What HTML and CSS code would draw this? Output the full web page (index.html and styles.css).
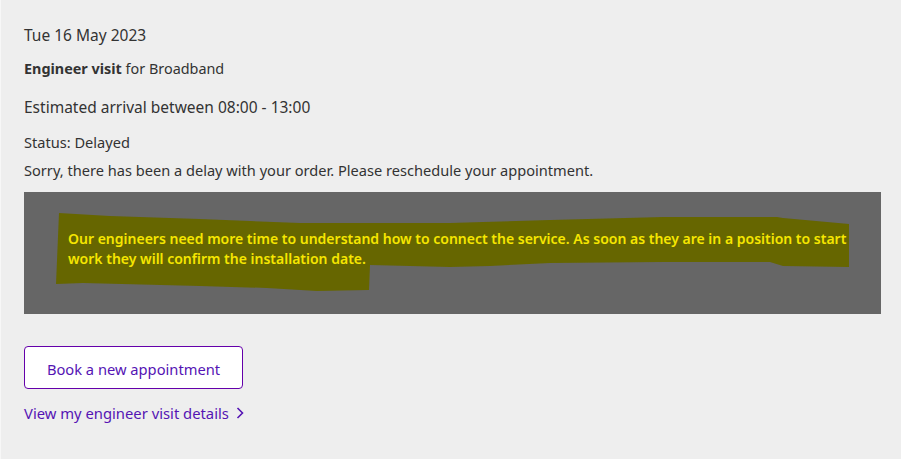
FILE: index.html
```html
<!DOCTYPE html>
<html lang="en">
<head>
<meta charset="utf-8">
<title>Engineer visit</title>
<link rel="stylesheet" href="styles.css">
</head>
<body>
<main class="card">
  <p class="date">Tue 16 May 2023</p>
  <p class="title"><strong>Engineer visit</strong> for Broadband</p>
  <p class="arrival">Estimated arrival between 08:00 - 13:00</p>
  <p class="status">Status: Delayed</p>
  <p class="sorry">Sorry, there has been a delay with your order. Please reschedule your appointment.</p>
  <section class="notice">
    <svg class="mark" width="901" height="120" viewBox="0 0 901 120" aria-hidden="true">
      <polygon fill="#666600" points="59,21 110,24 200,27 300,31 450,31 483,30 550,28 663,25 777,25 783,26 849,32 849,75 783,74 770,70 663,70 550,71 490,74 450,75 370,73 369,98 317,99 267,96 200,94 83,91 56,92"/>
    </svg>
    <p class="notice-text">Our engineers need more time to understand how to connect the service. As soon as they are in a position to start work they will confirm the installation date.</p>
  </section>
  <a class="btn" href="#">Book a new appointment</a>
  <a class="link" href="#">View my engineer visit details
    <svg class="chev" width="8" height="12" viewBox="0 0 8 12" aria-hidden="true"><path d="M1.5 1 L6.5 6 L1.5 11" fill="none" stroke="#5514b4" stroke-width="1.6"/></svg>
  </a>
</main>
</body>
</html>
```
FILE: styles.css
```css
html, body {
  margin: 0;
  background: #eeeeee;
}
body {
  font-family: "Noto Sans", "Open Sans", sans-serif;
  color: #333333;
  width: 901px;
  height: 459px;
  overflow: hidden;
  border-left: 1px solid #f7f7f7;
  box-sizing: border-box;
}
.card {
  padding: 25px 20px 0 23px;
  display: flex;
  flex-direction: column;
  align-items: flex-start;
}
.card p {
  margin: 0;
  line-height: 20px;
  font-size: 14.6px;
}
.card .date { font-size: 15.5px; }
.card .title { margin-top: 14px; font-size: 14.4px; }
.card .title strong { font-weight: 700; }
.card .arrival { margin-top: 18px; font-size: 15.5px; }
.card .status { margin-top: 15px; }
.card .sorry { margin-top: 8px; }
.notice {
  position: relative;
  margin-top: 12px;
  align-self: stretch;
  height: 122px;
  box-sizing: border-box;
  background: #666666;
  padding: 37px 30px 0 44px;
}
.mark {
  position: absolute;
  left: -24px;
  top: 0;
}
.card .notice-text {
  position: relative;
  font-size: 14px;
  line-height: 20px;
  color: #f6e600;
  font-weight: 600;
}
.btn {
  margin-top: 32px;
  box-sizing: border-box;
  width: 219px;
  height: 43px;
  padding-top: 2px;
  display: flex;
  align-items: center;
  justify-content: center;
  background: #ffffff;
  border: 1px solid #6400aa;
  border-radius: 4px;
  color: #5514b4;
  font-size: 14.7px;
  text-decoration: none;
}
.link {
  margin-top: 14px;
  display: flex;
  align-items: center;
  gap: 7px;
  color: #5514b4;
  font-size: 14.8px;
  line-height: 20px;
  text-decoration: none;
}
```
